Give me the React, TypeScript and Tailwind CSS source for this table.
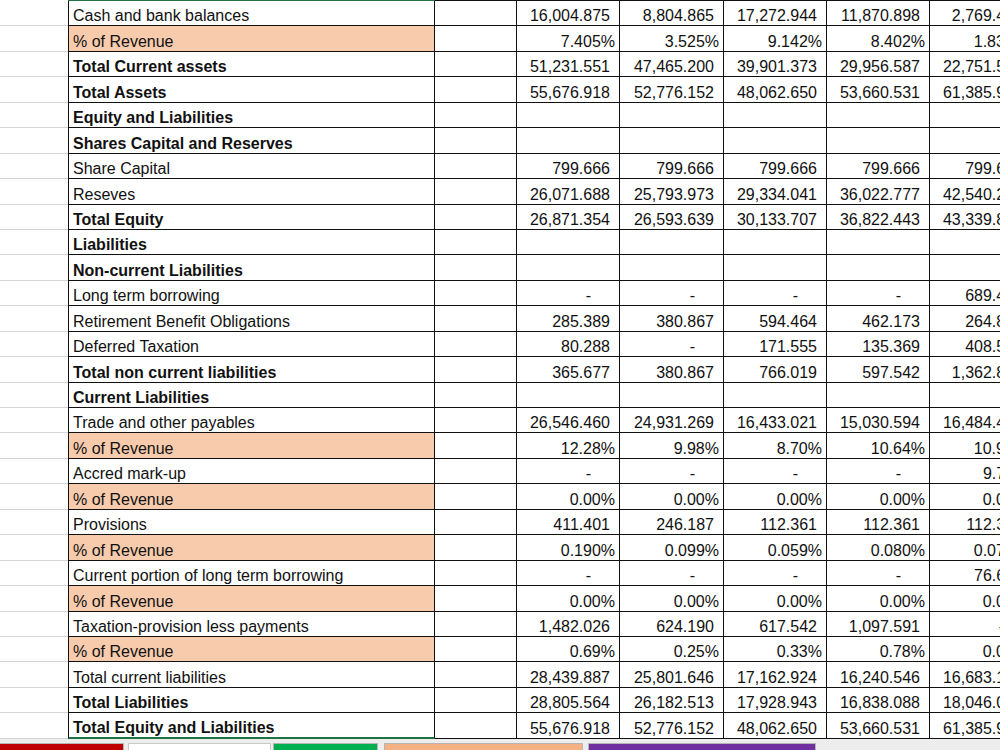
import React from "react";

type Row = { label: string; bold?: boolean; orange?: boolean; v?: string[] };

const rows: Row[] = [
  { label: "Cash and bank balances", v: ["16,004.875", "8,804.865", "17,272.944", "11,870.898", "2,769.453"] },
  { label: "% of Revenue", orange: true, v: ["7.405%", "3.525%", "9.142%", "8.402%", "1.839%"] },
  { label: "Total Current assets", bold: true, v: ["51,231.551", "47,465.200", "39,901.373", "29,956.587", "22,751.563"] },
  { label: "Total Assets", bold: true, v: ["55,676.918", "52,776.152", "48,062.650", "53,660.531", "61,385.938"] },
  { label: "Equity and Liabilities", bold: true },
  { label: "Shares Capital and Reserves", bold: true },
  { label: "Share Capital", v: ["799.666", "799.666", "799.666", "799.666", "799.666"] },
  { label: "Reseves", v: ["26,071.688", "25,793.973", "29,334.041", "36,022.777", "42,540.228"] },
  { label: "Total Equity", bold: true, v: ["26,871.354", "26,593.639", "30,133.707", "36,822.443", "43,339.894"] },
  { label: "Liabilities", bold: true },
  { label: "Non-current Liabilities", bold: true },
  { label: "Long term borrowing", v: ["-", "-", "-", "-", "689.457"] },
  { label: "Retirement Benefit Obligations", v: ["285.389", "380.867", "594.464", "462.173", "264.812"] },
  { label: "Deferred Taxation", v: ["80.288", "-", "171.555", "135.369", "408.569"] },
  { label: "Total non current liabilities", bold: true, v: ["365.677", "380.867", "766.019", "597.542", "1,362.838"] },
  { label: "Current Liabilities", bold: true },
  { label: "Trade and other payables", v: ["26,546.460", "24,931.269", "16,433.021", "15,030.594", "16,484.412"] },
  { label: "% of Revenue", orange: true, v: ["12.28%", "9.98%", "8.70%", "10.64%", "10.95%"] },
  { label: "Accred mark-up", v: ["-", "-", "-", "-", "9.723"] },
  { label: "% of Revenue", orange: true, v: ["0.00%", "0.00%", "0.00%", "0.00%", "0.01%"] },
  { label: "Provisions", v: ["411.401", "246.187", "112.361", "112.361", "112.361"] },
  { label: "% of Revenue", orange: true, v: ["0.190%", "0.099%", "0.059%", "0.080%", "0.075%"] },
  { label: "Current portion of long term borrowing", v: ["-", "-", "-", "-", "76.647"] },
  { label: "% of Revenue", orange: true, v: ["0.00%", "0.00%", "0.00%", "0.00%", "0.05%"] },
  { label: "Taxation-provision less payments", v: ["1,482.026", "624.190", "617.542", "1,097.591", "-"] },
  { label: "% of Revenue", orange: true, v: ["0.69%", "0.25%", "0.33%", "0.78%", "0.00%"] },
  { label: "Total current liabilities", v: ["28,439.887", "25,801.646", "17,162.924", "16,240.546", "16,683.155"] },
  { label: "Total Liabilities", bold: true, v: ["28,805.564", "26,182.513", "17,928.943", "16,838.088", "18,046.073"] },
  { label: "Total Equity and Liabilities", bold: true, v: ["55,676.918", "52,776.152", "48,062.650", "53,660.531", "61,385.938"] },
];

const widths = ["w-[103px]", "w-[104px]", "w-[103px]", "w-[103px]", "w-[103px]"];

function ValueCell({ value, w }: { value?: string; w: string }) {
  let pad = "pr-[9px]";
  if (value === "-") pad = "pr-[28px]";
  else if (value && value.endsWith("%")) pad = "pr-[4px]";
  return (
    <div className={`${w} shrink-0 h-full border-r border-b border-[#111] flex items-end justify-end pb-[1px] ${pad}`}>
      <span className="leading-[16px] whitespace-nowrap">{value ?? ""}</span>
    </div>
  );
}

export default function App() {
  return (
    <div
      className="w-[1000px] h-[750px] overflow-hidden bg-white text-[16px] text-[#111] flex flex-col"
      style={{ fontFamily: '"Liberation Sans", Arial, sans-serif' }}
    >
      {/* top strip */}
      <div className="flex h-[1px] shrink-0">
        <div className="w-[68px] shrink-0" />
        <div className="w-[367px] shrink-0 bg-[#1f7244]" />
        <div className="flex-1 bg-[#111]" />
      </div>
      <div className="flex flex-col shrink-0">
        {rows.map((r, i) => {
          const last = i === rows.length - 1;
          return (
            <div key={i} className="flex h-[25.45px] shrink-0">
              <div className="w-[68px] shrink-0 border-b border-[#d6d6d6]" />
              <div
                className={`w-[367px] shrink-0 border-l border-r border-[#111] flex items-end pl-[4px] pb-[1px] ${
                  last ? "border-b-2 border-b-[#1f7244]" : "border-b"
                } ${r.orange ? "bg-[#f8cbad]" : ""} ${r.bold ? "font-bold" : ""}`}
              >
                <span className="leading-[16px] whitespace-nowrap">{r.label}</span>
              </div>
              <div className="w-[82px] shrink-0 border-r border-b border-[#111]" />
              {widths.map((w, j) => (
                <ValueCell key={j} w={w} value={r.v ? r.v[j] : undefined} />
              ))}
            </div>
          );
        })}
      </div>
      {/* sheet tab strip */}
      <div className="flex-1 bg-[#ededed] flex items-end">
        <div className="flex items-end h-[7px] w-full">
          <div className="w-[124px] h-full border-t border-r border-[#b5b5b5] bg-[#c00000]" />
          <div className="w-[143px] h-full ml-[4px] bg-white border-t border-x border-[#c8c8c8]" />
          <div className="w-[105px] h-full ml-[2px] border border-b-0 border-[#b5b5b5] bg-[#00b050]" />
          <div className="w-[199px] h-full ml-[6px] border border-b-0 border-[#b5b5b5] bg-[#f4b183]" />
          <div className="w-[228px] h-full ml-[5px] border border-b-0 border-[#b5b5b5] bg-[#7030a0]" />
        </div>
      </div>
    </div>
  );
}
